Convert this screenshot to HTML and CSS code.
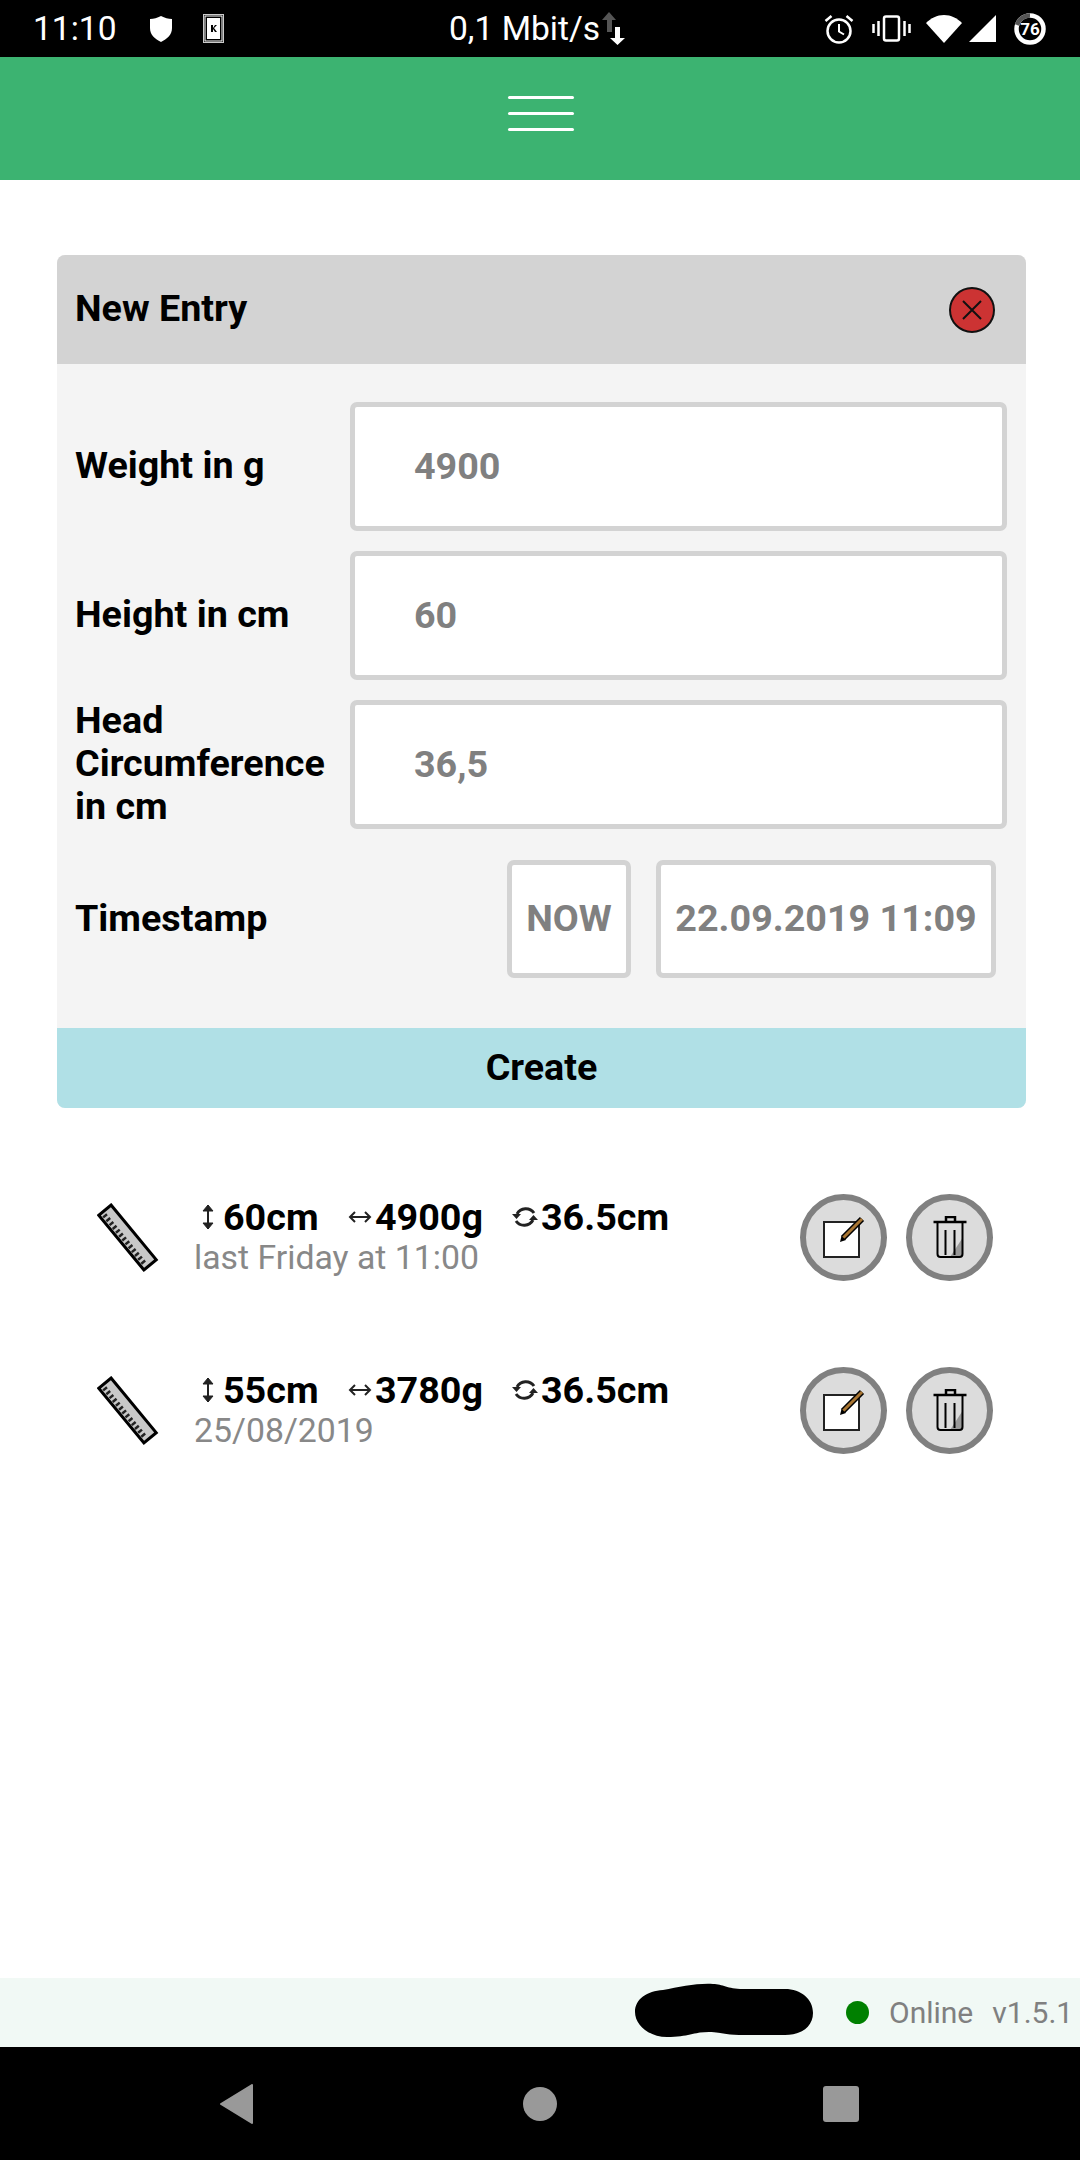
FILE: index.html
```html
<!DOCTYPE html>
<html lang="en">
<head>
  <meta charset="UTF-8">
  <title>New Entry</title>
  <link rel="stylesheet" href="styles.css">
</head>
<body>

  <!-- Android status bar -->
  <div class="status-bar">
    <span class="clock">11:10</span>
    <svg class="ic-shield" width="22" height="26" viewBox="0 0 22 26"><path d="M11 0C7 2 4 3 0 3v9c0 7 5 11 11 14 6-3 11-7 11-14V3c-4 0-7-1-11-3z" fill="#fff"/></svg>
    <svg class="ic-card" width="21" height="29" viewBox="0 0 21 29"><rect x=".5" y=".5" width="20" height="28" fill="#000" stroke="#ccc"/><rect x="2" y="2" width="17" height="25" fill="#000" stroke="#fff"/><rect x="4" y="4" width="13" height="21" fill="#fff"/><path d="M8 11v7h2v-3l2 3h2l-3-4 3-3h-2l-2 3v-3z" fill="#000"/></svg>
    <span class="net">0,1 Mbit/s</span>
    <svg class="ic-net" width="23" height="33" viewBox="0 0 23 33"><path d="M7 0l7 8h-4v12H5V8H0z" fill="#555"/><path d="M13 15h5v11h5l-7.500 7L8 26h5z" fill="#fff"/></svg>
    <div class="status-right">
      <svg width="30" height="30" viewBox="0 0 30 30" fill="none" stroke="#fff"><circle cx="15" cy="17" r="11.500" stroke-width="2.500"/><path d="M15 10v7.500l5 3" stroke-width="2"/><path d="M1.500 7l6-5M28.500 7l-6-5" stroke-width="2.500"/></svg>
      <svg width="39" height="27" viewBox="0 0 39 27" fill="none" stroke="#fff" stroke-width="2.500"><rect x="12" y="1.500" width="15" height="24" rx="2"/><path d="M1.500 9v9M6.500 6v15M32.500 6v15M37.500 9v9"/></svg>
      <svg class="ic-wifi" width="36" height="28" viewBox="0 0 36 28"><path d="M18 28L0 8C5 3 11 0 18 0s13 3 18 8z" fill="#fff"/></svg>
      <svg class="ic-signal" width="27" height="27" viewBox="0 0 27 27"><path d="M27 0v27H0z" fill="#fff"/></svg>
      <svg class="ic-battery" width="32" height="32" viewBox="0 0 32 32"><circle cx="16" cy="16" r="13.500" fill="none" stroke="#fff" stroke-width="4.500"/><path d="M3 12A13.500 13.500 0 0 1 16 2.500" fill="none" stroke="#555" stroke-width="4.500"/><text x="16" y="22" text-anchor="middle" class="battery-text">76</text></svg>
    </div>
  </div>

  <header class="top-bar">
    <div class="burger"><span></span><span></span><span></span></div>
  </header>

  <main class="content">
    <section class="card">
      <div class="card-head">
        <span>New Entry</span>
        <svg class="close" width="46" height="46" viewBox="0 0 46 46"><circle cx="23" cy="23" r="22" fill="#cc3333" stroke="#111" stroke-width="2"/><path d="M14 14l18 18M32 14L14 32" stroke="#111" stroke-width="2"/></svg>
      </div>
      <div class="card-body">
        <div class="field">
          <label>Weight in g</label>
          <input class="txt" type="text" value="4900">
        </div>
        <div class="field">
          <label>Height in cm</label>
          <input class="txt" type="text" value="60">
        </div>
        <div class="field">
          <label>Head Circumference in cm</label>
          <input class="txt" type="text" value="36,5">
        </div>
        <div class="time-row">
          <label>Timestamp</label>
          <button class="now" type="button">NOW</button>
          <input class="date" type="text" value="22.09.2019 11:09">
        </div>
      </div>
      <button class="create" type="button">Create</button>
    </section>

    <ul class="entries">
      <li class="entry">
        <svg class="ruler" width="64" height="70" viewBox="0 0 64 70"><g transform="translate(30.500 34.500) rotate(-39.500)"><rect x="-8" y="-35.500" width="16" height="71" fill="#c8c8c8" stroke="#000" stroke-width="3"/><path d="M-6 -31h5M-6 -26h5M-6 -21h5M-6 -16h5M-6 -11h5M-6 -6h5M-6 -1h5M-6 4h5M-6 9h5M-6 14h5M-6 19h5M-6 24h5M-6 29h5" stroke="#222" stroke-width="2.500"/></g></svg>
        <div class="entry-text">
          <div class="stats">
            <span class="stat stat-h"><svg width="14" height="28" viewBox="0 0 14 28" fill="none" stroke="#222" stroke-width="2"><path d="M7 2v24"/><path d="M2 8l5-6 5 6zM2 20l5 6 5-6z" fill="#222" stroke-width="1"/></svg>60cm</span>
            <span class="stat stat-w"><svg width="26" height="14" viewBox="0 0 26 14" fill="none" stroke="#222" stroke-width="2"><path d="M3 7h20M8 2L3 7l5 5M18 2l5 5-5 5"/></svg>4900g</span>
            <span class="stat stat-c"><svg width="26" height="24" viewBox="0 0 26 24" fill="none" stroke="#222" stroke-width="3"><path d="M22 8A10 10 0 0 0 5 9M4 16a10 10 0 0 0 17-1"/><path d="M0 9h9l-4.500 5zM26 15h-9l4.500-5z" fill="#222" stroke="none"/></svg>36.5cm</span>
          </div>
          <div class="when">last Friday at 11:00</div>
        </div>
        <button class="round" type="button">
          <svg width="44" height="44" viewBox="0 0 44 44"><rect x="2" y="6" width="35" height="35" fill="#fff" stroke="#222" stroke-width="2"/><path d="M21 22L40 3" stroke="#000" stroke-width="6"/><path d="M21 22L40 3" stroke="#a87532" stroke-width="3"/><path d="M18 26l1.500-6 4.500 4z" fill="#000"/></svg>
        </button>
        <button class="round" type="button">
          <svg width="44" height="44" viewBox="0 0 44 44" fill="none" stroke="#000" stroke-width="2"><path d="M18 5V1h9v4M5.500 6h33" stroke-width="2.500"/><path d="M34.500 22v16q0 3-3 3H22z" fill="#999" stroke="none"/><path d="M9.500 7v31q0 3 3 3h19q3 0 3-3V7"/><path d="M17.500 14v25M26.500 14v25"/></svg>
        </button>
      </li>
      <li class="entry">
        <svg class="ruler" width="64" height="70" viewBox="0 0 64 70"><g transform="translate(30.500 34.500) rotate(-39.500)"><rect x="-8" y="-35.500" width="16" height="71" fill="#c8c8c8" stroke="#000" stroke-width="3"/><path d="M-6 -31h5M-6 -26h5M-6 -21h5M-6 -16h5M-6 -11h5M-6 -6h5M-6 -1h5M-6 4h5M-6 9h5M-6 14h5M-6 19h5M-6 24h5M-6 29h5" stroke="#222" stroke-width="2.500"/></g></svg>
        <div class="entry-text">
          <div class="stats">
            <span class="stat stat-h"><svg width="14" height="28" viewBox="0 0 14 28" fill="none" stroke="#222" stroke-width="2"><path d="M7 2v24"/><path d="M2 8l5-6 5 6zM2 20l5 6 5-6z" fill="#222" stroke-width="1"/></svg>55cm</span>
            <span class="stat stat-w"><svg width="26" height="14" viewBox="0 0 26 14" fill="none" stroke="#222" stroke-width="2"><path d="M3 7h20M8 2L3 7l5 5M18 2l5 5-5 5"/></svg>3780g</span>
            <span class="stat stat-c"><svg width="26" height="24" viewBox="0 0 26 24" fill="none" stroke="#222" stroke-width="3"><path d="M22 8A10 10 0 0 0 5 9M4 16a10 10 0 0 0 17-1"/><path d="M0 9h9l-4.500 5zM26 15h-9l4.500-5z" fill="#222" stroke="none"/></svg>36.5cm</span>
          </div>
          <div class="when">25/08/2019</div>
        </div>
        <button class="round" type="button">
          <svg width="44" height="44" viewBox="0 0 44 44"><rect x="2" y="6" width="35" height="35" fill="#fff" stroke="#222" stroke-width="2"/><path d="M21 22L40 3" stroke="#000" stroke-width="6"/><path d="M21 22L40 3" stroke="#a87532" stroke-width="3"/><path d="M18 26l1.500-6 4.500 4z" fill="#000"/></svg>
        </button>
        <button class="round" type="button">
          <svg width="44" height="44" viewBox="0 0 44 44" fill="none" stroke="#000" stroke-width="2"><path d="M18 5V1h9v4M5.500 6h33" stroke-width="2.500"/><path d="M34.500 22v16q0 3-3 3H22z" fill="#999" stroke="none"/><path d="M9.500 7v31q0 3 3 3h19q3 0 3-3V7"/><path d="M17.500 14v25M26.500 14v25"/></svg>
        </button>
      </li>
    </ul>
  </main>

  <footer class="foot">
    <svg class="scribble" width="178" height="54" viewBox="0 0 178 54"><path d="M28 7C45 4 62 0 78 1c10 0 14 5 30 5h42c16 0 28 10 28 24s-12 22-28 22h-46c-14 0-18-3-30-3-16 0-20 5-42 5C14 54 0 42 0 29 0 16 12 8 28 7z" fill="#000"/></svg>
    <span class="dot"></span>
    <span class="online">Online</span>
    <span class="version">v1.5.1</span>
  </footer>

  <div class="nav-bar">
    <svg width="34" height="40" viewBox="0 0 34 40"><path d="M33 1v38L2 20z" fill="#999" stroke="#999" stroke-linejoin="round" stroke-width="2"/></svg>
    <span class="nav-home"></span>
    <span class="nav-recent"></span>
  </div>

</body>
</html>
```

FILE: styles.css
```css
* {
  box-sizing: border-box;
}

body {
  margin: 0;
  width: 1080px;
  height: 2160px;
  display: flex;
  flex-direction: column;
  background: #fff;
  color: #000;
  font-family: Roboto, sans-serif;
  overflow: hidden;
}

/* status bar */
.status-bar {
  height: 57px;
  flex: none;
  background: #000;
  color: #fff;
  display: flex;
  align-items: center;
  padding-left: 33px;
  font-size: 33.6px;
}

.clock {
  width: 117px;
}

.ic-card {
  margin-left: 31px;
}

.net {
  margin-left: 225px;
  width: 153px;
}

.status-right {
  display: flex;
  align-items: center;
  margin-left: auto;
  margin-right: 34px;
  gap: 18px;
}

.ic-wifi {
  margin-left: -3px;
}

.ic-signal {
  margin-left: -11px;
}

.battery-text {
  font-size: 17px;
  font-weight: 700;
  fill: #fff;
}

.top-bar {
  height: 123px;
  flex: none;
  background: #3cb371;
  display: flex;
  align-items: center;
  justify-content: center;
}

.burger {
  width: 66px;
  display: flex;
  flex-direction: column;
  gap: 13px;
  margin: 0 0 11px 2px;
}

.burger span {
  height: 3px;
  background: #fff;
  border-radius: 2px;
}

.content {
  flex: 1;
  padding: 75px 54px 0 57px;
}

/* new entry card */
.card {
  border-radius: 8px;
  overflow: hidden;
  background: #f4f4f4;
}

.card-head {
  height: 109px;
  background: #d3d3d3;
  display: flex;
  align-items: center;
  justify-content: space-between;
  padding: 0 31px 0 18px;
  font-size: 37.7px;
  font-weight: 700;
}

.card-head span {
  margin-bottom: 3px;
}

.card-body {
  padding: 38px 19px 50px 18px;
  display: flex;
  flex-direction: column;
  gap: 20px;
}

.field {
  height: 129px;
  display: flex;
  align-items: center;
}

label {
  font-size: 37.7px;
  font-weight: 700;
  line-height: 43px;
  margin-bottom: 2px;
}

.field label {
  width: 275px;
  flex: none;
}

input, .now {
  font-family: Roboto, sans-serif;
  font-size: 37.7px;
  font-weight: 700;
  color: #808080;
  background: #fff;
  border: 5px solid #d3d3d3;
  border-radius: 7px;
  outline: none;
}

.txt {
  flex: 1;
  min-width: 0;
  height: 129px;
  padding: 0 0 2px 59px;
}

.time-row {
  display: flex;
  align-items: center;
  margin-top: 11px;
  padding-right: 11px;
}

.time-row label {
  margin-right: auto;
}

.now {
  width: 124px;
  height: 118px;
  padding: 0 0 2px;
}

.date {
  width: 340px;
  height: 118px;
  margin-left: 25px;
  padding: 0 0 2px;
  text-align: center;
}

.create {
  display: block;
  width: 100%;
  height: 80px;
  border: none;
  padding: 0 0 2px;
  background: #b0e0e6;
  color: #000;
  font-family: Roboto, sans-serif;
  font-size: 37.7px;
  font-weight: 700;
}

/* entries */
.entries {
  list-style: none;
  margin: 86px 0 0;
  padding: 0;
}

.entry {
  height: 87px;
  display: flex;
  align-items: center;
  margin-bottom: 86px;
  padding-left: 40px;
}

.ruler {
  flex: none;
}

.entry-text {
  width: 639px;
  flex: none;
  padding-left: 34px;
}

.stats {
  display: flex;
  font-size: 37.7px;
  font-weight: 700;
  line-height: 36px;
  margin-bottom: 4px;
}

.stat {
  display: flex;
  align-items: center;
}

.stat-h {
  margin-left: 6px;
  width: 146px;
}

.stat-h svg {
  margin-right: 8px;
}

.stat-w {
  width: 165px;
}

.stat-w svg {
  margin-right: 2px;
}

.stat-c svg {
  margin-right: 3px;
}

.when {
  font-size: 33.8px;
  line-height: 38px;
  margin-left: -1px;
  color: #888;
}

.round {
  width: 87px;
  height: 87px;
  flex: none;
  padding: 0;
  border: 6px solid #808080;
  border-radius: 50%;
  background: #dcdcdc;
  display: flex;
  align-items: center;
  justify-content: center;
  margin-right: 19px;
}

/* footer */
.foot {
  height: 69px;
  flex: none;
  background: #f1f9f5;
  display: flex;
  align-items: center;
  padding-left: 635px;
  font-size: 30px;
  color: #808080;
}

.scribble {
  margin-bottom: 5px;
}

.dot {
  width: 23px;
  height: 23px;
  border-radius: 50%;
  background: #008000;
  margin-left: 33px;
  margin-right: 20px;
}

.version {
  margin-left: 19px;
}

.nav-bar {
  height: 113px;
  flex: none;
  background: #000;
  display: flex;
  align-items: center;
  padding-left: 219px;
}

.nav-home {
  width: 34px;
  height: 34px;
  border-radius: 50%;
  background: #999;
  margin-left: 270px;
}

.nav-recent {
  width: 36px;
  height: 36px;
  border-radius: 3px;
  background: #999;
  margin-left: 266px;
}
```
